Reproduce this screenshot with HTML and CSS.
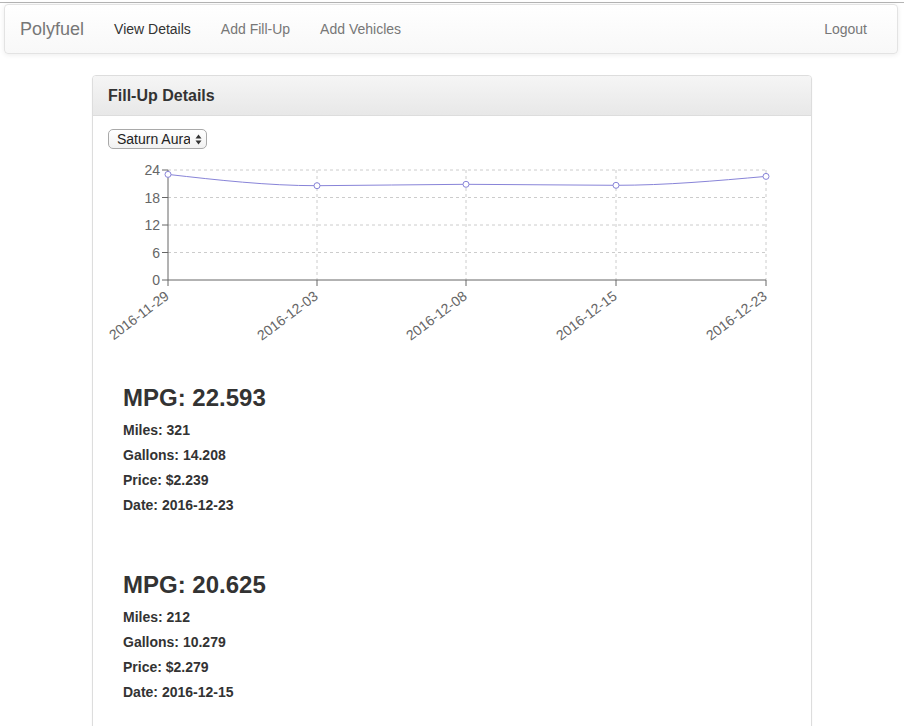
FILE: index.html
```html
<!DOCTYPE html>
<html>
<head>
<meta charset="utf-8">
<title>Polyfuel</title>
<link rel="stylesheet" href="styles.css">
</head>
<body>
<div class="topline"></div>
<nav class="navbar">
  <a class="brand" href="#">Polyfuel</a>
  <ul class="nav">
    <li><a class="active" href="#">View Details</a></li>
    <li><a href="#">Add Fill-Up</a></li>
    <li><a href="#">Add Vehicles</a></li>
  </ul>
  <ul class="nav nav-right">
    <li><a href="#">Logout</a></li>
  </ul>
</nav>
<div class="container">
  <div class="panel">
    <div class="panel-heading"><h3 class="panel-title">Fill-Up Details</h3></div>
    <div class="panel-body">
      <span class="select-wrap">
        <select class="vehicle-select"><option>Saturn Aura</option></select>
        <svg class="select-arrows" width="7" height="11" viewBox="0 0 7 11"><path d="M3.5 0.5 L6.5 4.5 L0.5 4.5 Z M3.5 10.5 L6.5 6.5 L0.5 6.5 Z" fill="#333"/></svg>
      </span>
      <svg class="chart" width="690" height="210" viewBox="108 155 690 210">
        <g class="grid" stroke="#ccc" stroke-dasharray="3 3" fill="none">
          <line x1="168" y1="170" x2="766" y2="170"/>
          <line x1="168" y1="197.5" x2="766" y2="197.5"/>
          <line x1="168" y1="225" x2="766" y2="225"/>
          <line x1="168" y1="252.5" x2="766" y2="252.5"/>
          <line x1="317" y1="170" x2="317" y2="280"/>
          <line x1="466" y1="170" x2="466" y2="280"/>
          <line x1="616" y1="170" x2="616" y2="280"/>
          <line x1="766" y1="170" x2="766" y2="280"/>
        </g>
        <g class="axis" stroke="#666" fill="none">
          <line x1="168" y1="170" x2="168" y2="280"/>
          <line x1="168" y1="280" x2="766" y2="280"/>
          <line x1="162" y1="170" x2="168" y2="170"/>
          <line x1="162" y1="197.5" x2="168" y2="197.5"/>
          <line x1="162" y1="225" x2="168" y2="225"/>
          <line x1="162" y1="252.5" x2="168" y2="252.5"/>
          <line x1="162" y1="280" x2="168" y2="280"/>
          <line x1="168" y1="280" x2="168" y2="286"/>
          <line x1="317" y1="280" x2="317" y2="286"/>
          <line x1="466" y1="280" x2="466" y2="286"/>
          <line x1="616" y1="280" x2="616" y2="286"/>
          <line x1="766" y1="280" x2="766" y2="286"/>
        </g>
        <g class="ylabels">
          <text x="160" y="175">24</text>
          <text x="160" y="202.5">18</text>
          <text x="160" y="230">12</text>
          <text x="160" y="257.5">6</text>
          <text x="160" y="285">0</text>
        </g>
        <g class="xlabels">
          <text x="170" y="298" transform="rotate(-37 170 298)">2016-11-29</text>
          <text x="319" y="298" transform="rotate(-37 319 298)">2016-12-03</text>
          <text x="468" y="298" transform="rotate(-37 468 298)">2016-12-08</text>
          <text x="618" y="298" transform="rotate(-37 618 298)">2016-12-15</text>
          <text x="768" y="298" transform="rotate(-37 768 298)">2016-12-23</text>
        </g>
        <path class="line" d="M168 174.4 C217.67 180.05 267.33 185.7 317 185.7 C366.67 185.7 416.33 184.3 466 184.3 C516 184.3 566 185.3 616 185.3 C666 185.3 716 180.85 766 176.4" fill="none" stroke="#8884d8" stroke-width="1"/>
        <g class="dots" fill="#fff" stroke="#8884d8">
          <circle cx="168" cy="174.4" r="3"/>
          <circle cx="317" cy="185.7" r="3"/>
          <circle cx="466" cy="184.3" r="3"/>
          <circle cx="616" cy="185.3" r="3"/>
          <circle cx="766" cy="176.4" r="3"/>
        </g>
      </svg>
      <div class="entries">
        <div class="entry">
          <h3>MPG: 22.593</h3>
          <h5>Miles: 321</h5>
          <h5>Gallons: 14.208</h5>
          <h5>Price: $2.239</h5>
          <h5>Date: 2016-12-23</h5>
        </div>
        <div class="entry">
          <h3>MPG: 20.625</h3>
          <h5>Miles: 212</h5>
          <h5>Gallons: 10.279</h5>
          <h5>Price: $2.279</h5>
          <h5>Date: 2016-12-15</h5>
        </div>
      </div>
    </div>
  </div>
</div>
</body>
</html>
```

FILE: styles.css
```css
* { box-sizing: border-box; }
html, body { margin: 0; padding: 0; }
body {
  font-family: "Liberation Sans", Arial, Helvetica, sans-serif;
  font-size: 14px;
  line-height: 20px;
  color: #333;
  background: #fff;
  padding-right: 2px;
}
.topline {
  margin-top: 2px;
  height: 1px;
  background: #b5b5b5;
}
.navbar {
  display: flex;
  align-items: stretch;
  height: 50px;
  margin: 1px 6px 0 4px;
  border: 1px solid #e3e3e3;
  border-radius: 4px;
  background: linear-gradient(to bottom, #ffffff 0%, #f8f8f8 100%);
  box-shadow: inset 0 1px 0 rgba(255,255,255,.15), 0 1px 5px rgba(0,0,0,.075);
}
.navbar a { text-decoration: none; }
.brand {
  display: block;
  padding: 14px 15px 14px 15px;
  font-size: 18px;
  line-height: 20px;
  color: #777;
}
.nav {
  display: flex;
  list-style: none;
  margin: 0;
  padding: 0;
}
.nav a {
  display: block;
  padding: 14px 15px 14px;
  line-height: 20px;
  font-size: 14px;
  color: #777;
}
.nav a.active { color: #333; }
.nav-right { margin-left: auto; margin-right: 15px; }
.container {
  width: 750px;
  margin: 21px auto 0;
  padding: 0 15px;
}
.panel {
  border: 1px solid #ddd;
  border-radius: 4px;
  background: #fff;
  box-shadow: 0 1px 2px rgba(0,0,0,.05);
  min-height: 760px;
}
.panel-heading {
  padding: 10px 15px;
  border-bottom: 1px solid #ddd;
  border-radius: 3px 3px 0 0;
  background: linear-gradient(to bottom, #f5f5f5 0%, #e8e8e8 100%);
}
.panel-title {
  margin: 0;
  font-size: 16px;
  line-height: 19px;
  font-weight: bold;
  color: #333;
}
.panel-body { padding: 13px 15px 15px; }
.select-wrap {
  position: relative;
  display: inline-block;
  vertical-align: top;
}
.vehicle-select {
  -webkit-appearance: none;
  appearance: none;
  display: block;
  width: 99px;
  height: 20px;
  margin: 0;
  padding: 0 16px 0 8px;
  border: 1px solid #a9a9a9;
  border-radius: 5px;
  background: linear-gradient(to bottom, #ffffff 0%, #f1f1f1 100%);
  font-family: "Liberation Sans", Arial, sans-serif;
  font-size: 14px;
  line-height: 18px;
  color: #222;
}
.select-arrows {
  position: absolute;
  right: 5px;
  top: 5px;
  pointer-events: none;
}
.chart {
  display: block;
  margin-top: 6px;
  overflow: visible;
}
.chart text {
  font-family: "Liberation Sans", Arial, sans-serif;
  font-size: 14px;
  fill: #666;
}
.ylabels text { text-anchor: end; }
.xlabels text { text-anchor: end; }
.entries {
  display: flex;
  flex-direction: column;
  gap: 59px;
  margin-top: 20px;
  padding: 0 15px;
}
.entry h3 {
  margin: 0 0 12px;
  font-size: 24px;
  line-height: 26px;
  font-weight: bold;
  color: #333;
}
.entry h5 {
  margin: 0 0 10px;
  font-size: 14px;
  line-height: 15px;
  font-weight: bold;
  color: #333;
}
.entry h5:last-child { margin-bottom: 0; }
```
